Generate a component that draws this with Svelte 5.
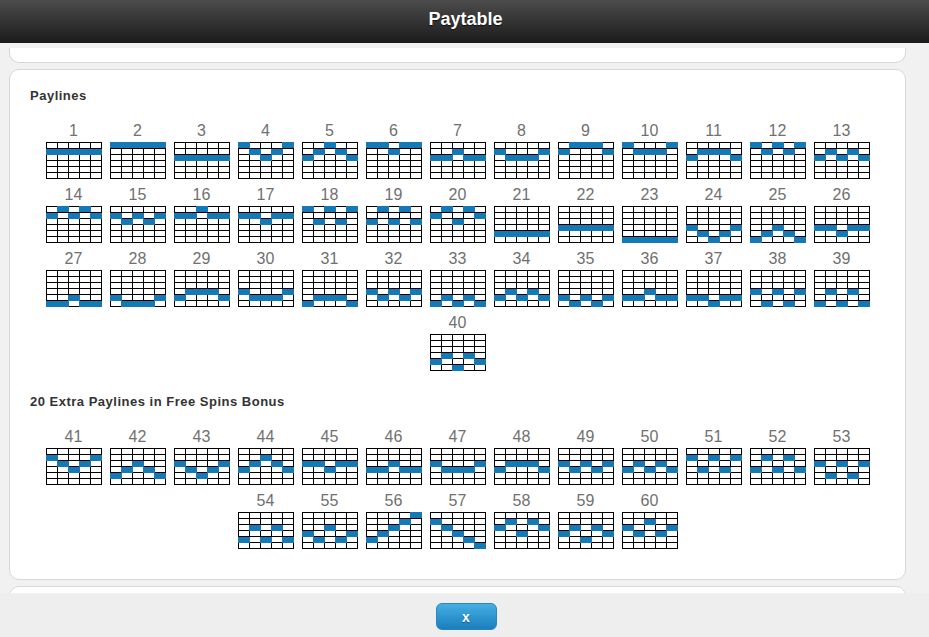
<script>
	const firstSet = [
		[1,1,1,1,1],[0,0,0,0,0],[2,2,2,2,2],[0,1,2,1,0],[2,1,0,1,2],[0,0,1,0,0],[2,2,1,2,2],[1,2,2,2,1],[1,0,0,0,1],[0,1,1,1,0],
		[2,1,1,1,2],[0,1,0,1,0],[2,1,2,1,2],[1,0,1,0,1],[1,2,1,2,1],[1,1,0,1,1],[1,1,2,1,1],[0,2,0,2,0],[2,0,2,0,2],[1,0,2,0,1],
		[4,4,4,4,4],[3,3,3,3,3],[5,5,5,5,5],[3,4,5,4,3],[5,4,3,4,5],[3,3,4,3,3],[5,5,4,5,5],[4,5,5,5,4],[4,3,3,3,4],[3,4,4,4,3],
		[5,4,4,4,5],[3,4,3,4,3],[5,4,5,4,5],[4,3,4,3,4],[4,5,4,5,4],[4,4,3,4,4],[4,4,5,4,4],[3,5,3,5,3],[5,3,5,3,5],[4,3,5,3,4]
	];
	const extraSet = [
		[1,2,3,2,1],[4,3,2,3,4],[2,3,4,3,2],[3,2,1,2,3],[2,2,3,2,2],[3,3,2,3,3],[2,3,3,3,2],[3,2,2,2,3],[2,3,2,3,2],[3,2,3,2,3],
		[1,3,1,3,1],[3,1,3,1,3],[2,4,2,4,2],[4,2,4,2,4],[3,4,2,4,3],[4,3,2,1,0],[1,2,3,4,5],[2,1,3,1,2],[3,2,4,2,3],[2,3,1,3,2]
	];
	const rows = [0, 1, 2, 3, 4, 5];
	const cols = [0, 1, 2, 3, 4];
</script>

{#snippet lines(set, start)}
	<div class="lines">
		{#each set as line, i}
			<div class="line">
				<div class="num">{start + i}</div>
				<div class="grid">
					{#each rows as r}
						{#each cols as c}
							<span class:on={line[c] === r} class:top={r === 0}></span>
						{/each}
					{/each}
				</div>
			</div>
		{/each}
	</div>
{/snippet}

<div class="page">
	<header>Paytable</header>
	<div class="content">
		<div class="card stub-top"></div>
		<div class="card main">
			<h4>Paylines</h4>
			{@render lines(firstSet, 1)}
			<h4 class="second">20 Extra Paylines in Free Spins Bonus</h4>
			{@render lines(extraSet, 41)}
		</div>
		<div class="card stub-bottom"></div>
	</div>
	<footer>
		<button>x</button>
	</footer>
</div>

<style>
	:global(body) {
		background: #eee;
		font-family: "Liberation Sans", Arial, sans-serif;
	}

	.page {
		display: flex;
		flex-direction: column;
		height: 637px;
		overflow: hidden;
	}

	header {
		height: 43px;
		line-height: 39px;
		padding-left: 2px;
		flex: none;
		text-align: center;
		color: #fff;
		font-size: 18px;
		font-weight: bold;
		text-shadow: 0 1px 1px #111;
		background: linear-gradient(#4c4c4c, #1b1b1b);
	}

	.content {
		flex: 1;
		min-height: 0;
		overflow: hidden;
		padding: 5px 23px 0 9px;
		background: #f1f1f1;
	}

	.card {
		box-sizing: border-box;
		background: #fff;
		border: 1px solid #d8d8d8;
		border-radius: 10px;
		margin-bottom: 6px;
	}

	.stub-top {
		height: 15px;
		border-top: none;
		border-radius: 0 0 10px 10px;
	}

	.main {
		height: 511px;
		padding: 17px 19px;
	}

	.stub-bottom {
		height: 40px;
	}

	h4 {
		margin: 0;
		height: 16px;
		line-height: 18px;
		padding-left: 1px;
		font-size: 13px;
		color: #333;
		letter-spacing: 0.5px;
	}

	h4.second {
		margin-top: 16px;
	}

	.lines {
		display: flex;
		flex-wrap: wrap;
		justify-content: center;
		width: 832px;
		margin: 18px auto 0;
	}

	.line {
		width: 64px;
		height: 64px;
		display: flex;
		flex-direction: column;
		align-items: center;
	}

	.num {
		height: 21px;
		line-height: 20px;
		font-size: 16px;
		color: #707070;
	}

	.grid {
		box-sizing: border-box;
		width: 56px;
		height: 37px;
		display: grid;
		grid-template-columns: repeat(5, 10px);
		grid-template-rows: repeat(6, 5px);
		gap: 1px;
		padding: 1px;
		background: #000;
	}

	.grid span {
		background: #fff;
	}

	.grid span.on {
		background: #1579b5;
		box-shadow: -1px 0 0 #1579b5, 1px 0 0 #1579b5, 0 1px 0 #1579b5, -1px 1px 0 #1579b5, 1px 1px 0 #1579b5;
	}

	.grid span.on.top {
		box-shadow: -1px 0 0 #1579b5, 1px 0 0 #1579b5, 0 -1px 0 #1579b5, -1px -1px 0 #1579b5, 1px -1px 0 #1579b5;
	}

	footer {
		height: 44px;
		flex: none;
		background: #eee;
		display: flex;
		justify-content: center;
		padding: 10px 0 0 3px;
		box-sizing: border-box;
	}

	button {
		width: 61px;
		height: 27px;
		padding: 0;
		border: 1px solid #2a86c0;
		border-radius: 6px;
		background: linear-gradient(#45aee3, #1a7ebd);
		color: #fff;
		font-family: inherit;
		font-size: 14px;
		font-weight: bold;
		text-shadow: 0 1px 1px #145a8a;
	}
</style>
